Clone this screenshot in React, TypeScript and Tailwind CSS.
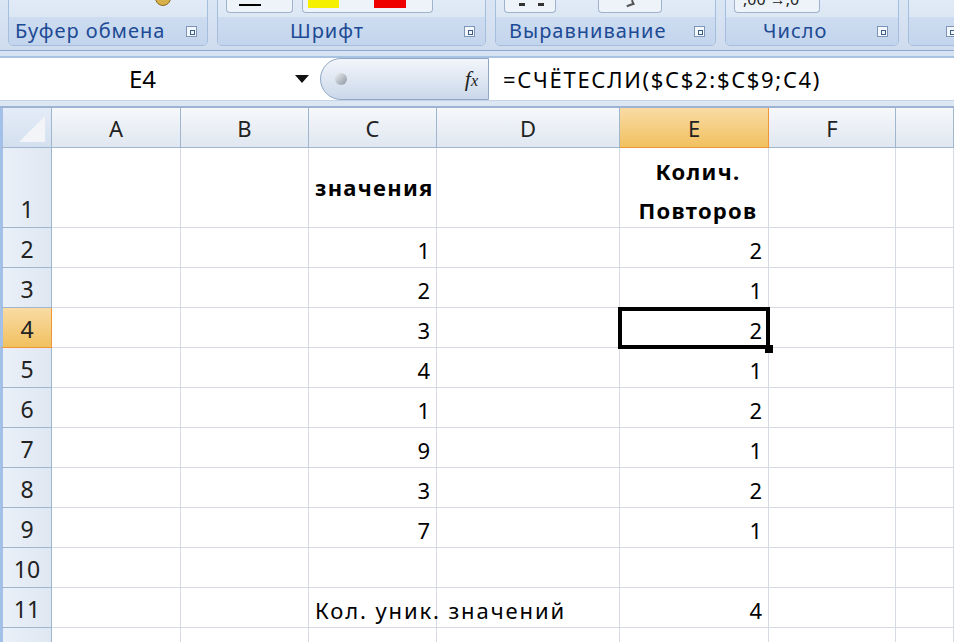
import React from "react";

const FONT = { fontFamily: '"Noto Sans", "Open Sans", sans-serif' };
const GRID = "grid grid-cols-[52px_129px_128px_128px_183px_149px_127px_1fr]";

function Launcher() {
  return (
    <div className="w-[11px] h-[11px] border border-[#7d95b6] bg-[#f4f7fb] flex items-end justify-end p-[1px]">
      <div className="w-[5px] h-[5px] border border-[#3b5e8c]" />
    </div>
  );
}

function Btn({ w, children, className = "" }: { w: string; children?: React.ReactNode; className?: string }) {
  return (
    <div className={`${w} h-[13px] rounded-b-[4px] border border-t-0 border-[#9fb3cd] bg-[#eef3f9] flex items-start overflow-hidden ${className}`}>
      {children}
    </div>
  );
}

function Group({
  w,
  label,
  children,
  pl,
}: {
  w: string;
  label: string;
  children?: React.ReactNode;
  pl: string;
}) {
  return (
    <div
      className={`${w} shrink-0 h-[52px] -mt-[6px] rounded-[5px] border border-[#a6bedd] bg-gradient-to-b from-[#e3ecf7] to-[#d3e1f1] overflow-hidden flex flex-col`}
    >
      <div className="h-[22px] pt-[5px] pl-[8px] flex gap-[9px]">{children}</div>
      <div className="flex-1 bg-gradient-to-b from-[#cddcf0] to-[#c3d5ed] flex items-center">
        <span className={`text-[20px] tracking-[1px] text-[#1d4a94] leading-none flex-1 whitespace-nowrap ${pl}`} style={FONT}>
          {label}
        </span>
        <div className="pr-[10px]">
          <Launcher />
        </div>
      </div>
    </div>
  );
}

function Ribbon() {
  return (
    <div className="h-[50px] bg-gradient-to-b from-[#dbe6f4] to-[#cfdcee] overflow-hidden flex gap-[9px] pl-[8px]">
      <Group w="w-[200px]" label="Буфер обмена" pl="pl-[6px]">
        <div className="ml-[138px] -mt-[3px] w-[16px] h-[9px] rounded-b-full bg-[#d8b04a] border border-[#8a6a20]" />
      </Group>
      <Group w="w-[269px]" label="Шрифт" pl="pl-[72px]">
        <Btn w="w-[67px]" className="pl-[12px] pt-[4px]">
          <div className="w-[22px] h-[2px] bg-black" />
        </Btn>
        <Btn w="w-[131px]" className="pl-[5px] gap-[35px]">
          <div className="w-[31px] h-[8px] bg-[#f5f000]" />
          <div className="w-[32px] h-[8px] bg-[#ee0000]" />
        </Btn>
      </Group>
      <Group w="w-[221px]" label="Выравнивание" pl="pl-[13px]">
        <Btn w="w-[52px]" className="pl-[14px] gap-[13px] pt-[3px]">
          <div className="w-[6px] h-[3px] bg-[#333]" />
          <div className="w-[6px] h-[3px] bg-[#333]" />
        </Btn>
        <Btn w="w-[64px]" className="ml-[33px] justify-center pt-[1px]">
          <div className="w-[8px] h-[5px] border-b-2 border-r-2 border-[#555] rotate-[-20deg]" />
        </Btn>
      </Group>
      <Group w="w-[174px]" label="Число" pl="pl-[37px]">
        <Btn w="w-[86px]" className="pl-[8px]">
          <span className="text-[16px] text-[#222] leading-none -mt-[9px] whitespace-nowrap" style={FONT}>
            ,00 →,0
          </span>
        </Btn>
      </Group>
      <Group w="w-[60px]" label="" pl="pl-0" />
    </div>
  );
}

function FormulaBar() {
  return (
    <div>
      <div className="h-[8px] bg-[#d7e3f2] border-t border-[#8eaad0] border-b-[2px] border-b-[#a9c2e2]" />
      <div className="h-[42px] flex bg-white">
        <div className="w-[320px] flex items-center pl-[129px] pr-[11px]">
          <span className="text-[24px] text-black leading-none" style={FONT}>
            E4
          </span>
          <svg className="ml-auto" width="14" height="9" viewBox="0 0 14 9">
            <path d="M0 0 L14 0 L7 8 Z" fill="#111" />
          </svg>
        </div>
        <div className="w-[169px] h-[42px] rounded-l-full border border-[#8ea7c7] bg-gradient-to-b from-[#f3f6fb] to-[#cbd8ea] flex items-center justify-between pl-[14px] pr-[10px]">
          <div className="w-[12px] h-[12px] rounded-full bg-gradient-to-br from-[#eef0f2] to-[#8c96a2]" />
          <span className="text-[22px] italic text-[#222] leading-none" style={{ fontFamily: '"Liberation Serif", serif' }}>
            f<span className="text-[16px]">x</span>
          </span>
        </div>
        <div className="flex-1 flex items-center pl-[14px]">
          <span className="text-[22px] tracking-[1.7px] text-black leading-none" style={FONT}>
            =СЧЁТЕСЛИ($C$2:$C$9;C4)
          </span>
        </div>
      </div>
      <div className="h-[8px] bg-[#dde7f3] border-t border-[#c4d3e6] border-b-[2px] border-b-[#9cb3d2]" />
    </div>
  );
}

const colLetters = ["A", "B", "C", "D", "E", "F", ""];

function ColHeader() {
  return (
    <div className={`${GRID} h-[40px]`}>
      <div className="flex items-end justify-end pr-[6px] pb-[5px] bg-gradient-to-b from-[#e4ecf7] to-[#d4e0ef] border-r border-b border-[#9eb6ce] border-l-[3px] border-l-[#a3c1e8]">
        <svg width="26" height="26" viewBox="0 0 26 26">
          <path d="M26 0 L26 26 L0 26 Z" fill="#f2f4f7" />
        </svg>
      </div>
      {colLetters.map((c, i) => (
        <div
          key={i}
          className={`flex items-center justify-center border-r border-b text-[22px] leading-none ${
            c === "E"
              ? "bg-gradient-to-b from-[#f9dba3] to-[#f1c15f] border-[#f29536] text-[#222]"
              : "bg-gradient-to-b from-[#f6f8fb] to-[#e0e7f0] border-[#9eb6ce] text-[#222]"
          }`}
          style={FONT}
        >
          {c}
        </div>
      ))}
    </div>
  );
}

type RowData = {
  n: number;
  c?: React.ReactNode;
  e?: React.ReactNode;
};

const rows: RowData[] = [
  { n: 2, c: "1", e: "2" },
  { n: 3, c: "2", e: "1" },
  { n: 4, c: "3", e: "2" },
  { n: 5, c: "4", e: "1" },
  { n: 6, c: "1", e: "2" },
  { n: 7, c: "9", e: "1" },
  { n: 8, c: "3", e: "2" },
  { n: 9, c: "7", e: "1" },
  { n: 10 },
  { n: 11, e: "4" },
  { n: 12 },
];

function RowHeader({ n, selected }: { n: number; selected?: boolean }) {
  return (
    <div
      className={`flex items-end justify-center pb-[6px] border-r border-b border-l-[3px] border-l-[#a3c1e8] text-[23px] leading-none ${
        selected
          ? "bg-gradient-to-b from-[#f9dba3] to-[#f1c15f] border-r-[#f29536] border-b-[#f29536] text-[#222]"
          : "bg-gradient-to-r from-[#eaf0f8] to-[#dfe7f2] border-r-[#9eb6ce] border-b-[#9eb6ce] text-[#222]"
      }`}
      style={FONT}
    >
      {n === 12 ? "" : n}
    </div>
  );
}

const cellBase = "border-r border-b border-[#d5dae3] bg-white relative";
const numCell = `${cellBase} flex items-end justify-end pr-[6px] pb-[6px] text-[22px] leading-none text-black`;

function Row({ r }: { r: RowData }) {
  const sel = r.n === 4;
  return (
    <div className={`${GRID} grid-rows-[40px] h-[40px]`}>
      <RowHeader n={r.n} selected={sel} />
      <div className={cellBase} />
      <div className={cellBase} />
      <div className={numCell} style={FONT}>
        {r.n === 11 ? (
          <span className="absolute left-[6px] bottom-[6px] whitespace-nowrap z-10 tracking-[1.9px]">
            Кол. уник. значений
          </span>
        ) : (
          r.c
        )}
      </div>
      <div className={cellBase} />
      <div className={numCell} style={FONT}>
        {r.e}
        {sel && (
          <>
            <div className="absolute left-[-2px] top-[-1px] right-[-2px] bottom-[-2px] border-[4px] border-black z-20" />
            <div className="absolute right-[-5px] bottom-[-6px] w-[8px] h-[8px] bg-black z-30" />
          </>
        )}
      </div>
      <div className={cellBase} />
      <div className={cellBase} />
    </div>
  );
}

function Row1() {
  return (
    <div className={`${GRID} grid-rows-[80px] h-[80px]`}>
      <RowHeader n={1} />
      <div className={cellBase} />
      <div className={cellBase} />
      <div
        className={`${cellBase} flex items-center pl-[6px] text-[22px] tracking-[1.3px] font-bold text-black`}
        style={FONT}
      >
        значения
      </div>
      <div className={cellBase} />
      <div
        className={`${cellBase} flex flex-col items-center pt-[4px] pl-[8px] text-[22px] tracking-[1.3px] font-bold text-black leading-[39px]`}
        style={FONT}
      >
        <span>Колич.</span>
        <span className="h-[36px]">Повторов</span>
      </div>
      <div className={cellBase} />
      <div className={cellBase} />
    </div>
  );
}

export default function App() {
  return (
    <div className="w-[954px] h-[642px] overflow-hidden bg-white" style={FONT}>
      <Ribbon />
      <FormulaBar />
      <ColHeader />
      <Row1 />
      {rows.map((r) => (
        <Row key={r.n} r={r} />
      ))}
    </div>
  );
}
